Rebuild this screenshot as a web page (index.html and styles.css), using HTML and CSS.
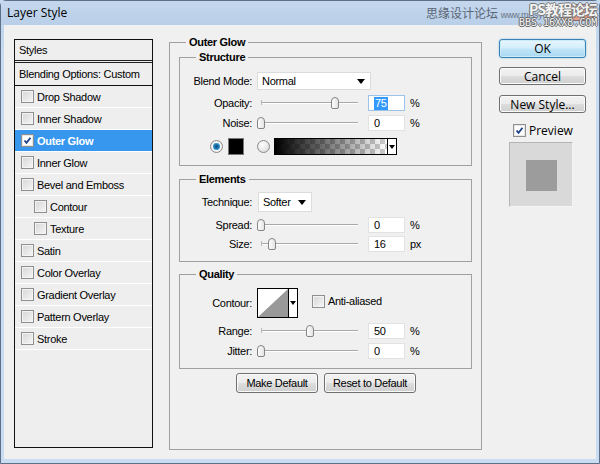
FILE: index.html
```html
<!DOCTYPE html>
<html>
<head>
<meta charset="utf-8">
<title>Layer Style</title>
<link rel="stylesheet" href="styles.css">
</head>
<body>
<div class="window">
  <div class="titlebar">
    <span class="title">Layer Style</span>
    <div class="closebtn"></div>
    <div class="wm wm1">思缘设计论坛 <span class="wm-url">www.missyuan.com</span></div>
    <div class="wm wm2">PS教程论坛</div>
    <div class="wm wm3">BBS.16XX8.COM</div>
  </div>
  <div class="body">
    <div class="styles-panel">
      <div class="sp-head">Styles</div>
      <div class="sp-blend">Blending Options: Custom</div>
      <div class="sp-row"><span class="cb"></span>Drop Shadow</div>
      <div class="sp-row"><span class="cb"></span>Inner Shadow</div>
      <div class="sp-row sel"><span class="cb on"><svg viewBox="0 0 11 11" width="11" height="11"><path d="M2.5 5.5 L4.5 7.8 L8.5 2.8" fill="none" stroke="#1c3f8a" stroke-width="1.8"/></svg></span>Outer Glow</div>
      <div class="sp-row"><span class="cb"></span>Inner Glow</div>
      <div class="sp-row"><span class="cb"></span>Bevel and Emboss</div>
      <div class="sp-row sub"><span class="cb"></span>Contour</div>
      <div class="sp-row sub"><span class="cb"></span>Texture</div>
      <div class="sp-row"><span class="cb"></span>Satin</div>
      <div class="sp-row"><span class="cb"></span>Color Overlay</div>
      <div class="sp-row"><span class="cb"></span>Gradient Overlay</div>
      <div class="sp-row"><span class="cb"></span>Pattern Overlay</div>
      <div class="sp-row"><span class="cb"></span>Stroke</div>
    </div>

    <div class="group main">
      <div class="gtitle gt-main">Outer Glow</div>

      <div class="group sub structure">
        <div class="gtitle">Structure</div>
        <div class="row r-blend">
          <span class="lbl">Blend Mode:</span>
          <div class="select sel-blend"><span>Normal</span><i class="arrow"></i></div>
        </div>
        <div class="row r-opacity">
          <span class="lbl">Opacity:</span>
          <div class="slider"><div class="track"></div><div class="thumb" style="left:74px"></div></div>
          <div class="input focus"><span class="hl">75</span></div>
          <span class="unit">%</span>
        </div>
        <div class="row r-noise">
          <span class="lbl">Noise:</span>
          <div class="slider"><div class="track"></div><div class="thumb" style="left:0px"></div></div>
          <div class="input"><span>0</span></div>
          <span class="unit">%</span>
        </div>
        <div class="row r-color">
          <span class="radio on"></span>
          <span class="swatch"></span>
          <span class="radio r2"></span>
          <div class="gradbox"><div class="grad"></div><div class="gradarrow"><i class="arrow small"></i></div></div>
        </div>
      </div>

      <div class="group sub elements">
        <div class="gtitle">Elements</div>
        <div class="row r-tech">
          <span class="lbl">Technique:</span>
          <div class="select sel-tech"><span>Softer</span><i class="arrow"></i></div>
        </div>
        <div class="row r-spread">
          <span class="lbl">Spread:</span>
          <div class="slider"><div class="track"></div><div class="thumb" style="left:0px"></div></div>
          <div class="input"><span>0</span></div>
          <span class="unit">%</span>
        </div>
        <div class="row r-size">
          <span class="lbl">Size:</span>
          <div class="slider"><div class="track"></div><div class="thumb" style="left:11px"></div></div>
          <div class="input"><span>16</span></div>
          <span class="unit">px</span>
        </div>
      </div>

      <div class="group sub quality">
        <div class="gtitle">Quality</div>
        <div class="row r-contour">
          <span class="lbl">Contour:</span>
          <div class="contour">
            <svg class="curve" viewBox="0 0 30 28" width="30" height="28"><polygon points="0,28 30,0 30,28" fill="#999"/></svg>
            <div class="contour-arrow"><i class="arrow small"></i></div>
          </div>
          <span class="cb plain"></span>
          <span class="aa">Anti-aliased</span>
        </div>
        <div class="row r-range">
          <span class="lbl">Range:</span>
          <div class="slider"><div class="track"></div><div class="thumb" style="left:49px"></div></div>
          <div class="input"><span>50</span></div>
          <span class="unit">%</span>
        </div>
        <div class="row r-jitter">
          <span class="lbl">Jitter:</span>
          <div class="slider"><div class="track"></div><div class="thumb" style="left:0px"></div></div>
          <div class="input"><span>0</span></div>
          <span class="unit">%</span>
        </div>
      </div>

      <div class="btnrow">
        <div class="btn w-make">Make Default</div>
        <div class="btn w-reset">Reset to Default</div>
      </div>
    </div>

    <div class="side">
      <div class="btn big ok">OK</div>
      <div class="btn big cancel">Cancel</div>
      <div class="btn big newstyle">New Style...</div>
      <div class="preview-row"><span class="cb on"><svg viewBox="0 0 11 11" width="11" height="11"><path d="M2.5 5.5 L4.5 7.8 L8.5 2.8" fill="none" stroke="#1c3f8a" stroke-width="1.8"/></svg></span><span>Preview</span></div>
      <div class="preview"><div class="pv-square"></div></div>
    </div>
  </div>
</div>
</body>
</html>
```
FILE: styles.css
```css
* { box-sizing: border-box; }
html, body { margin: 0; padding: 0; }
body {
  width: 600px; height: 464px; overflow: hidden;
  font-family: "Liberation Sans", Arial, sans-serif;
  font-size: 11px; letter-spacing: -0.3px; color: #000; background: #c6daf0;
}
.window {
  width: 600px; height: 464px;
  display: flex; flex-direction: column;
  background: linear-gradient(#bcd2ea, #c9dcf1 60px, #c9dcf1);
  border: 1px solid #5d7087;
  border-radius: 6px 6px 0 0;
}
.titlebar {
  position: relative;
  height: 24px; flex: none;
  background: linear-gradient(#c4d7ed, #b9cfe8);
}
.title {
  position: absolute; left: 6px; top: 4px;
  font-family: "Open Sans", "Liberation Sans", sans-serif;
  font-size: 12px; line-height: 16px; color: #000; letter-spacing: 0;
}
.closebtn {
  position: absolute; left: 560px; top: 3px; width: 33px; height: 17px;
  border-radius: 3px; border: 1px solid #8d6a66;
  background: linear-gradient(#ecc0b6, #dc9583 50%, #d17a66 50%, #e0a596);
}
.wm { position: absolute; white-space: nowrap; font-family: "Noto Sans CJK SC", "Liberation Sans", sans-serif; letter-spacing: 0; }
.wm1 { left: 425px; top: 4px; font-size: 12px; line-height: 16px; color: #5a6575; }
.wm-url { font-family: "Liberation Sans", sans-serif; font-size: 9px; color: #6a7585; letter-spacing: -0.3px; }
.wm2 {
  left: 528px; top: 0px; font-size: 14px; line-height: 17px; color: #f4f4f4; font-weight: bold;
  text-shadow: -1px 0 #777, 1px 0 #777, 0 -1px #777, 0 1px #777;
  letter-spacing: -1px;
}
.wm3 {
  left: 518px; top: 16px; font-family: "DejaVu Sans Mono", monospace; font-size: 10px; line-height: 11px; color: #f4f4f4;
  text-shadow: -1px 0 #666, 1px 0 #666, 0 -1px #666, 0 1px #666;
}

.body {
  flex: 1;
  margin: 0 3px 4px 3px;
  background: #f0f0f0;
  display: flex; align-items: flex-start;
  padding-top: 14px;
}

/* Styles list */
.styles-panel {
  margin-left: 10px;
  width: 139px; height: 409px;
  border: 1px solid #111;
  background: #eeeeee;
  display: flex; flex-direction: column;
}
.sp-head {
  height: 23px; line-height: 20px;
  padding-left: 4px;
  border-bottom: 3px double #222;
}
.sp-blend {
  height: 23px; line-height: 22px;
  padding-left: 4px;
  border-bottom: 1px solid #111;
}
.sp-row {
  height: 22px;
  display: flex; align-items: center;
  padding-left: 6px;
  border-bottom: 1px solid #fff;
}
.sp-row.sub { padding-left: 19px; }
.sp-row .cb { margin-right: 3px; }
.sp-row.sel { background: #3797ee; color: #fff; font-weight: bold; }

.cb {
  width: 13px; height: 13px; flex: none;
  border: 1px solid #8e8f8f;
  background: linear-gradient(135deg, #d6d6d6, #f6f6f6);
  box-shadow: inset 0 0 0 1px #f4f4f4;
  display: inline-flex; align-items: center; justify-content: center;
}
.cb.on { background: #fff; box-shadow: inset 0 0 0 1px #e6e6e6; }

/* groups */
.group { border: 1px solid #a0a0a0; }
.gtitle {
  height: 14px; line-height: 14px;
  margin-top: -8px;
  width: max-content;
  padding: 0 3px;
  background: #f0f0f0;
  font-weight: bold;
}
.main {
  margin-left: 16px; margin-top: 3px;
  width: 313px; height: 408px;
  padding: 0 9px;
}
.gt-main { margin-left: 7px; }
.group.sub .gtitle { margin-left: 16px; }
.structure { margin-top: 8px; padding-bottom: 10px; }
.elements { margin-top: 13px; padding-bottom: 9px; }
.quality { margin-top: 12px; padding-bottom: 9px; }

.row { display: flex; align-items: center; }
.lbl { width: 72px; flex: none; text-align: right; }

.r-blend { margin-top: 8px; height: 18px; }
.r-opacity { margin-top: 5px; height: 16px; }
.r-noise { margin-top: 4px; height: 16px; }
.r-color { margin-top: 7px; height: 17px; padding-left: 30px; }
.r-tech { margin-top: 6px; height: 20px; }
.r-spread { margin-top: 5px; height: 16px; }
.r-size { margin-top: 3px; height: 16px; }
.r-contour { margin-top: 7px; height: 30px; }
.r-range { margin-top: 5px; height: 16px; }
.r-jitter { margin-top: 4px; height: 16px; }

.select {
  margin-left: 5px;
  height: 100%;
  background: #fff;
  border: 1px solid #dcdcdc;
  display: flex; align-items: center; justify-content: space-between;
  padding: 0 5px 0 4px;
}
.sel-blend { width: 114px; }
.sel-tech { width: 54px; margin-left: 6px; }
.arrow {
  display: block; width: 0; height: 0;
  border-left: 4px solid transparent; border-right: 4px solid transparent;
  border-top: 5px solid #000;
}
.arrow.small { border-left-width: 3px; border-right-width: 3px; border-top-width: 4px; }

.slider { position: relative; margin-left: 5px; width: 105px; height: 14px; flex: none; }
.track {
  position: absolute; left: 4px; right: 4px; top: 6px;
  height: 2px; border-top: 1px solid #a8a8a8; border-bottom: 1px solid #fff;
}
.track::before {
  content: ""; position: absolute; left: 0; top: -3px; width: 1px; height: 5px; background: #b8b8b8;
}
.thumb {
  position: absolute; top: 1px;
  width: 8px; height: 12px;
  border: 1px solid #858585;
  border-radius: 4px 4px 2px 2px;
  background: linear-gradient(90deg, #fdfdfd, #e4e4e4);
}
.input {
  margin-left: 6px; width: 37px; height: 16px; flex: none;
  background: #fff; border: 1px solid #e2e2e2;
  padding-left: 5px; display: flex; align-items: center;
}
.input.focus { border-color: #9cc4ea; }
.hl { background: #3399ff; color: #fff; padding: 0 1px; line-height: 13px; }
.unit { margin-left: 5px; }

.radio {
  width: 13px; height: 13px; border-radius: 50%; flex: none;
  border: 1px solid #8a8a8a;
  background: radial-gradient(circle at 40% 35%, #fff, #d4d4d4);
}
.radio.on {
  background: radial-gradient(circle at 50% 50%, #0d4a74 0, #1f7fb8 2.5px, #69b3e0 3.5px, #fff 4px, #e0e0e0 6px);
}
.swatch {
  margin-left: 5px; width: 16px; height: 17px; flex: none;
  background: #000; border: 1px solid #777;
}
.radio.r2 { margin-left: 13px; }
.gradbox {
  margin-left: 4px; width: 123px; height: 17px; flex: none;
  border: 1px solid #000; display: flex;
}
.grad {
  flex: 1;
  background:
    linear-gradient(to right, #000 0%, rgba(0,0,0,0) 100%),
    conic-gradient(#cdcdcd 25%, #fff 0 50%, #cdcdcd 0 75%, #fff 0) 0 0 / 10px 10px;
}
.gradarrow {
  width: 9px; border-left: 1px solid #000; background: #fff;
  display: flex; align-items: center; justify-content: center;
}

.contour {
  margin-left: 5px; width: 41px; height: 30px; flex: none;
  border: 1px solid #000; background: #fff; display: flex;
}
.curve { display: block; margin: 0; }
.contour-arrow {
  flex: 1; border-left: 1px solid #000;
  display: flex; align-items: center; justify-content: center;
}
.cb.plain { margin-left: 14px; margin-top: -4px; }
.aa { margin-left: 3px; margin-top: -4px; }

.btnrow { display: flex; gap: 6px; margin-top: 4px; padding-left: 57px; }
.btn {
  height: 20px;
  border: 1px solid #707070; border-radius: 3px;
  background: linear-gradient(#f3f3f3 0%, #ebebeb 48%, #dddddd 52%, #cfcfcf 100%);
  box-shadow: inset 0 0 0 1px #fbfbfb;
  display: flex; align-items: center; justify-content: center;
}
.w-make { width: 82px; }
.w-reset { width: 92px; }

.side {
  margin-left: 17px;
  width: 87px;
  display: flex; flex-direction: column;
  font-family: "Open Sans", "Liberation Sans", sans-serif;
  font-size: 12px; letter-spacing: 0;
}
.btn.big { height: 18px; }
.ok {
  height: 19px !important;
  border-color: #3c7fb1;
  background: linear-gradient(#e7f5fd 0%, #d4eefb 48%, #bfe5f8 52%, #a9d9f2 100%);
  box-shadow: inset 0 0 0 1px #c9ecfb, 0 0 2px #7fc4ec;
}
.cancel { margin-top: 9px; }
.newstyle { margin-top: 10px; }
.preview-row {
  margin-top: 11px; margin-left: 14px;
  display: flex; align-items: center; height: 13px;
}
.preview-row .cb { margin-right: 3px; }
.preview {
  margin-top: 5px; margin-left: 10px;
  width: 64px; height: 65px;
  background: #d9d9d9;
  border-top: 1px solid #b5b5b5; border-left: 1px solid #b5b5b5;
  border-right: 1px solid #f4f4f4; border-bottom: 1px solid #f4f4f4;
  padding: 17px 0 0 16px;
}
.pv-square { width: 31px; height: 31px; background: #9c9c9c; }
```
